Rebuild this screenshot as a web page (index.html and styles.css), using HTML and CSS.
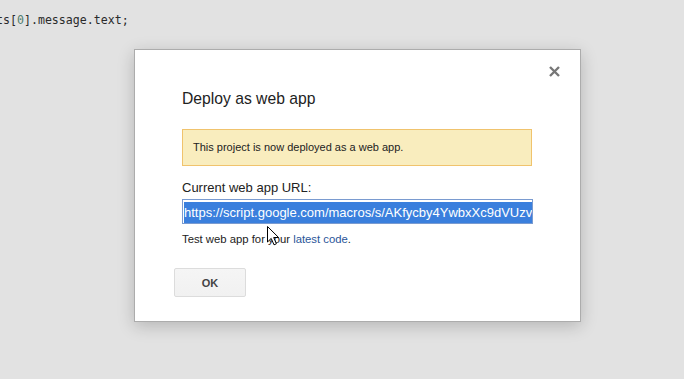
FILE: index.html
```html
<!DOCTYPE html>
<html lang="en">
<head>
    <meta charset="UTF-8">
    <meta name="viewport" content="width=device-width, initial-scale=1.0">
    <title>Deploy as web app</title>
    <link rel="stylesheet" href="styles.css">
</head>
<body>
    <div class="code">ts[<span class="num">0</span>].message.text;</div>

    <div class="dialog">
        <div class="close">
            <svg width="11" height="11" viewBox="0 0 11 11">
                <path d="M1 1 L10 10 M10 1 L1 10" stroke="#777" stroke-width="2.4" fill="none"/>
            </svg>
        </div>
        <h2 class="title">Deploy as web app</h2>
        <div class="notice">This project is now deployed as a web app.</div>
        <div class="label">Current web app URL:</div>
        <div class="url"><span class="sel">https://script.google.com/macros/s/AKfycby4YwbxXc9dVUzvQh3kLm</span></div>
        <div class="hint">Test web app for your <a href="#">latest code</a>.</div>
        <button class="ok">OK</button>
    </div>

    <svg class="pointer" width="13" height="20" viewBox="0 0 13 20">
        <path d="M0.5 0.5 L0.5 16 L4.2 12.4 L7 18.8 L9.4 17.8 L6.7 11.5 L11.6 11.5 Z" fill="#fff" stroke="#000" stroke-width="1"/>
    </svg>
</body>
</html>
```

FILE: styles.css
```css
*{
    margin: 0;
    padding: 0;
    box-sizing: border-box;
}
body{
    background: #e2e2e2;
    font-family: "Liberation Sans", Arial, sans-serif;
    width: 684px;
    height: 379px;
    overflow: hidden;
    position: relative;
}
.code{
    font-family: "DejaVu Sans Mono", monospace;
    font-size: 11.6px;
    line-height: 16px;
    color: #2a2a2a;
    padding-top: 12px;
    margin-left: -4px;
}
.num{
    color: #4f7d6c;
}
.dialog{
    position: absolute;
    left: 134px;
    top: 49px;
    width: 447px;
    height: 273px;
    background: #fff;
    border: 1px solid #acacac;
    box-shadow: 0 4px 16px rgba(0,0,0,0.2);
    padding: 39px 47px 0 47px;
}
.close{
    position: absolute;
    right: 20px;
    top: 16px;
    width: 11px;
    height: 11px;
}
.close svg{
    display: block;
}
.title{
    font-size: 15.7px;
    font-weight: normal;
    line-height: 20px;
    color: #222;
}
.notice{
    margin-top: 20px;
    margin-right: 1px;
    height: 37px;
    background: #f9edbe;
    border: 1px solid #f0c36d;
    font-size: 11px;
    line-height: 35px;
    padding-left: 10px;
    color: #222;
}
.label{
    margin-top: 14px;
    font-size: 13px;
    line-height: 16px;
    color: #222;
}
.url{
    margin-top: 3px;
    height: 25px;
    border: 1px solid #7a9bd0;
    padding: 2px 0 0 1px;
    overflow: hidden;
    white-space: nowrap;
    font-size: 13px;
    line-height: 21px;
}
.sel{
    background: #3a7fdd;
    color: #fff;
    display: inline-block;
}
.hint{
    margin-top: 8px;
    font-size: 11.3px;
    line-height: 15px;
    color: #222;
}
.hint a{
    color: #2a5599;
    text-decoration: none;
}
.ok{
    margin-top: 21px;
    margin-left: -8px;
    width: 72px;
    height: 29px;
    background: linear-gradient(#f5f5f5, #f1f1f1);
    border: 1px solid #dcdcdc;
    border-radius: 2px;
    font-family: "Liberation Sans", Arial, sans-serif;
    font-size: 11px;
    font-weight: bold;
    color: #444;
}
.pointer{
    position: absolute;
    left: 267px;
    top: 226px;
}
```
